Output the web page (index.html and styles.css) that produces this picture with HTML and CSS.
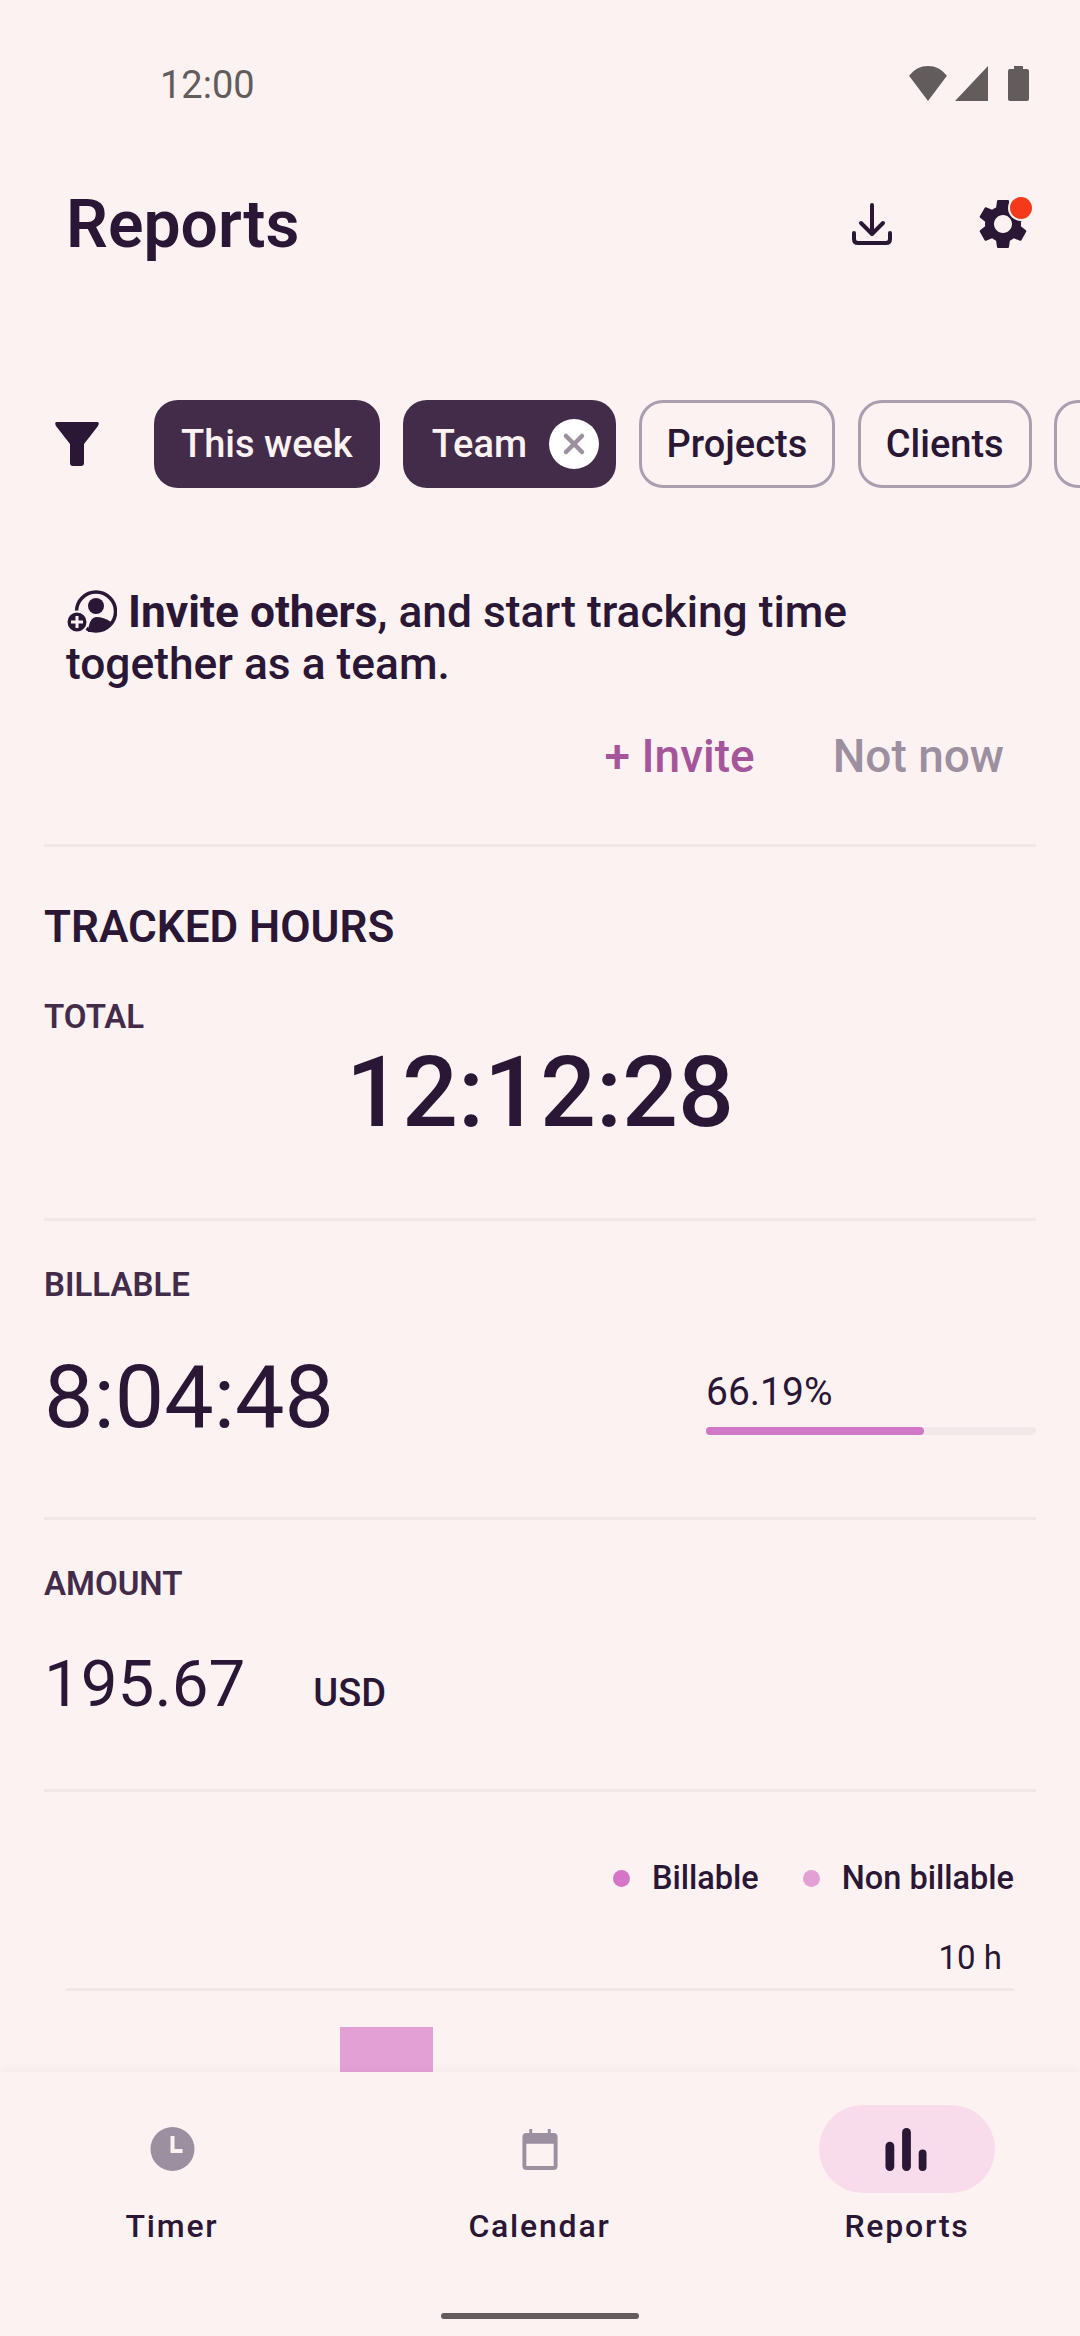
FILE: index.html
```html
<!DOCTYPE html>
<html lang="en">
<head>
    <meta charset="UTF-8">
    <meta name="viewport" content="width=device-width, initial-scale=1.0">
    <title>Reports</title>
    <link rel="stylesheet" href="styles.css">
</head>
<body>
    <div class="page">
        <div class="status-bar">
            <span class="status-time">12:00</span>
            <div class="status-icons">
                <svg class="wifi-icon" viewBox="0 0 40 36"><path d="M20 36 L0.5 10 Q8 0 20 0 Q32 0 39.5 10 Z"/></svg>
                <svg class="signal-icon" viewBox="0 0 33 35"><path d="M33 0 V35 H0 Z"/></svg>
                <svg class="battery-icon" viewBox="0 0 21 35"><path d="M6 0 H15 V3 H19 Q21 3 21 5 V33 Q21 35 19 35 H2 Q0 35 0 33 V5 Q0 3 2 3 H6 Z"/></svg>
            </div>
        </div>

        <div class="page-header">
            <h1>Reports</h1>
            <svg class="download-icon" viewBox="0 0 40 42"><path d="M20 2 V30 M9 20 L20 31 L31 20 M2 30 V36 Q2 40 6 40 H34 Q38 40 38 36 V30"/></svg>
            <div class="settings">
                <svg class="gear-icon" viewBox="0 0 24 24"><path d="M19.14 12.94c.04-.3.06-.61.06-.94 0-.32-.02-.64-.07-.94l2.03-1.58c.18-.14.23-.41.12-.61l-1.92-3.32c-.12-.22-.37-.29-.59-.22l-2.39.96c-.5-.38-1.03-.7-1.62-.94l-.36-2.54c-.04-.24-.24-.41-.48-.41h-3.84c-.24 0-.43.17-.47.41l-.36 2.54c-.59.24-1.13.57-1.62.94l-2.39-.96c-.22-.08-.47 0-.59.22L2.74 8.87c-.12.21-.08.47.12.61l2.03 1.58c-.05.3-.09.63-.09.94s.02.64.07.94l-2.03 1.58c-.18.14-.23.41-.12.61l1.92 3.32c.12.22.37.29.59.22l2.39-.96c.5.38 1.03.7 1.62.94l.36 2.54c.05.24.24.41.48.41h3.84c.24 0 .44-.17.47-.41l.36-2.54c.59-.24 1.13-.56 1.62-.94l2.39.96c.22.08.47 0 .59-.22l1.92-3.32c.12-.22.07-.47-.12-.61l-2.01-1.58zM12 15.6c-1.98 0-3.6-1.62-3.6-3.6s1.62-3.6 3.6-3.6 3.6 1.62 3.6 3.6-1.62 3.6-3.6 3.6z"/></svg>
                <span class="settings-badge"></span>
            </div>
        </div>

        <div class="filter-row">
            <svg class="filter-icon" viewBox="0 0 44 44"><path d="M2 0 H42 Q45 0 43 4 L29 22 V41 Q29 44 26 44 H18 Q15 44 15 41 V22 L1 4 Q-1 0 2 0 Z"/></svg>
            <div class="chip chip-active">This week</div>
            <div class="chip chip-active chip-team">
                Team
                <svg class="chip-close" viewBox="0 0 50 50"><circle cx="25" cy="25" r="25"/><path d="M17 17 L33 33 M33 17 L17 33"/></svg>
            </div>
            <div class="chip">Projects</div>
            <div class="chip">Clients</div>
            <div class="chip chip-stub"></div>
        </div>

        <div class="invite">
            <p class="invite-text">
                <svg class="invite-icon" viewBox="0 0 51 43">
                    <circle class="invite-ring" cx="30" cy="21.5" r="19.5"/>
                    <circle class="invite-fill" cx="30" cy="16" r="8"/>
                    <path class="invite-fill" d="M22 42 Q23 28 30 27 Q38 27 45 32 Q38 42 26 42 Z"/>
                    <circle class="invite-badge" cx="11" cy="32" r="10.5"/>
                    <path class="invite-plus" d="M11 26 V38 M5 32 H17"/>
                </svg>
                <b>Invite others</b>, and start tracking time<br>together as a team.
            </p>
            <div class="invite-actions">
                <span class="invite-yes">+ Invite</span>
                <span class="invite-no">Not now</span>
            </div>
        </div>

        <div class="section section-total">
            <h2>TRACKED HOURS</h2>
            <div class="label">TOTAL</div>
            <div class="total-value">12:12:28</div>
        </div>

        <div class="section section-billable">
            <div class="label">BILLABLE</div>
            <div class="billable-row">
                <div class="billable-value">8:04:48</div>
                <div class="billable-progress">
                    <div class="billable-percent">66.19%</div>
                    <div class="progress-track"><div class="progress-fill" style="width: 66.19%"></div></div>
                </div>
            </div>
        </div>

        <div class="section section-amount">
            <div class="label">AMOUNT</div>
            <div class="amount-row">
                <span class="amount-value">195.67</span>
                <span class="amount-currency">USD</span>
            </div>
        </div>

        <div class="chart">
            <div class="legend">
                <span class="legend-item"><i class="dot dot-billable"></i>Billable</span>
                <span class="legend-item"><i class="dot dot-non"></i>Non billable</span>
            </div>
            <div class="chart-axis">10 h</div>
            <div class="chart-plot"><div class="chart-bar"></div></div>
        </div>

        <nav class="bottom-nav">
            <div class="nav-item">
                <div class="nav-icon">
                    <svg class="clock-icon" viewBox="0 0 44 46"><path fill-rule="evenodd" d="M22 1 A22 22 0 1 1 22 45 A22 22 0 1 1 22 1 Z M20 10 V27 H32 V23 H24 V10 Z"/></svg>
                </div>
                <span>Timer</span>
            </div>
            <div class="nav-item">
                <div class="nav-icon">
                    <svg class="calendar-icon" viewBox="0 0 36 42"><path fill-rule="evenodd" d="M7 0 H10 V4 H26 V0 H29 V4 H32 Q36 4 36 8 V38 Q36 42 32 42 H4 Q0 42 0 38 V8 Q0 4 4 4 H7 Z M4 15 V38 H32 V15 Z"/></svg>
                </div>
                <span>Calendar</span>
            </div>
            <div class="nav-item nav-item-active">
                <div class="nav-icon">
                    <svg class="bars-icon" viewBox="0 0 42 44"><rect x="0" y="14" width="9" height="30" rx="4.5"/><rect x="17" y="0" width="9" height="44" rx="4.5"/><rect x="34" y="22" width="8" height="22" rx="4"/></svg>
                </div>
                <span>Reports</span>
            </div>
        </nav>
        <div class="home-bar"></div>
    </div>
</body>
</html>
```

FILE: styles.css
```css
* {
    box-sizing: border-box;
}

body {
    margin: 0;
    background: #fdf2f2;
    color: #2a1735;
    font-family: 'Roboto', sans-serif;
}

.page {
    position: relative;
    display: flex;
    flex-direction: column;
    width: 1080px;
    height: 2336px;
    overflow: hidden;
}

/* status bar */
.status-bar {
    display: flex;
    justify-content: space-between;
    align-items: center;
    height: 36px;
    margin-top: 65px;
    padding: 0 51px 0 160px;
    color: #635c5c;
}

.status-time {
    padding-top: 3px;
    font-size: 38px;
}

.status-icons {
    display: flex;
    align-items: center;
    gap: 7px;
}

.status-icons svg {
    display: block;
    height: 35px;
    fill: #635c5c;
}

.wifi-icon {
    width: 40px;
}

.signal-icon {
    width: 33px;
}

.battery-icon {
    width: 21px;
    margin-left: 13px;
}

/* header */
.page-header {
    display: flex;
    align-items: center;
    height: 60px;
    margin-top: 93px;
    padding-left: 66px;
}

h1 {
    margin: 0;
    flex: 1;
    font-size: 66px;
    font-weight: 600;
}

.download-icon {
    width: 40px;
    height: 42px;
    margin-right: 81px;
    fill: none;
    stroke: #2a1735;
    stroke-width: 4;
    stroke-linecap: round;
    stroke-linejoin: round;
}

.settings {
    position: relative;
    width: 60px;
    height: 60px;
    margin-right: 47px;
}

.gear-icon {
    display: block;
    width: 60px;
    height: 60px;
    fill: #2a1735;
}

.settings-badge {
    position: absolute;
    top: 1px;
    right: -1px;
    width: 26px;
    height: 26px;
    border: 2px solid #fdf2f2;
    border-radius: 50%;
    background: #f53a1c;
}

/* filter chips */
.filter-row {
    display: flex;
    align-items: center;
    gap: 22.5px;
    height: 88px;
    margin-top: 146px;
    padding-left: 55px;
    white-space: nowrap;
}

.filter-icon {
    flex: none;
    width: 44px;
    height: 44px;
    margin-right: 32px;
    fill: #2a1735;
}

.chip {
    display: flex;
    flex: none;
    align-items: center;
    height: 88px;
    padding: 0 25px;
    border: 3px solid #ab9eb0;
    border-radius: 24px;
    font-size: 38px;
    font-weight: 500;
}

.chip-active {
    padding: 0 27.5px;
    border: 0;
    background: #422c4a;
    color: #fdf2f2;
}

.chip-team {
    gap: 22px;
    padding-left: 29px;
    padding-right: 17px;
}

.chip-stub {
    width: 60px;
}

.chip-close {
    width: 50px;
    height: 50px;
}

.chip-close circle {
    fill: #fff;
}

.chip-close path {
    fill: none;
    stroke: #9c8fa0;
    stroke-width: 4.5;
    stroke-linecap: round;
}

/* invite banner */
.invite {
    padding: 0 66px;
    margin-top: 98px;
}

.invite-text {
    margin: 0;
    font-size: 44.3px;
    line-height: 52px;
    font-weight: 500;
}

.invite-text b {
    font-weight: 700;
}

.invite-icon {
    width: 51px;
    height: 43px;
    vertical-align: -6px;
}

.invite-ring {
    fill: none;
    stroke: #2a1735;
    stroke-width: 3.5;
}

.invite-fill {
    fill: #2a1735;
}

.invite-badge {
    fill: #2a1735;
    stroke: #fdf2f2;
    stroke-width: 2;
}

.invite-plus {
    stroke: #fdf2f2;
    stroke-width: 3;
}

.invite-actions {
    display: flex;
    justify-content: flex-end;
    gap: 78px;
    margin-top: 38px;
    padding-right: 10px;
    font-size: 46px;
    font-weight: 500;
    line-height: 56px;
}

.invite-yes {
    color: #a5569a;
}

.invite-no {
    color: #9c8fa0;
}

/* stats */
.section {
    margin: 0 44px;
    border-top: 3px solid #f2e8ea;
}

.section-total {
    margin-top: 60px;
    height: 374px;
    padding-top: 56px;
}

h2 {
    margin: 0;
    font-size: 44px;
    line-height: 48px;
    font-weight: 600;
}

.label {
    font-size: 33px;
    line-height: 36px;
    font-weight: 600;
    color: #422c4a;
}

.section-total .label {
    margin-top: 48px;
}

.total-value {
    margin-top: 8px;
    text-align: center;
    font-size: 98.5px;
    line-height: 100px;
    font-weight: 500;
}

.section-billable {
    height: 299px;
    padding-top: 46px;
}

.billable-row {
    display: flex;
    justify-content: space-between;
    margin-top: 44px;
}

.billable-value {
    font-size: 88px;
    line-height: 100px;
}

.billable-progress {
    width: 330px;
    padding-top: 23px;
}

.billable-percent {
    font-size: 39px;
    line-height: 44px;
}

.progress-track {
    height: 8px;
    margin-top: 13px;
    border-radius: 4px;
    background: #f2e8ea;
}

.progress-fill {
    height: 8px;
    border-radius: 4px;
    background: #d077c7;
}

.section-amount {
    height: 272px;
    padding-top: 46px;
}

.amount-row {
    display: flex;
    align-items: baseline;
    gap: 68px;
    margin-top: 42px;
}

.amount-value {
    font-size: 65.5px;
    line-height: 80px;
}

.amount-currency {
    font-size: 38px;
    font-weight: 500;
}

/* chart */
.chart {
    flex: 1;
    min-height: 0;
    margin: 0 44px;
    border-top: 3px solid #f2e8ea;
    overflow: hidden;
}

.legend {
    display: flex;
    justify-content: flex-end;
    gap: 44px;
    margin-top: 66px;
    padding-right: 22px;
    font-size: 32.5px;
    line-height: 40px;
    font-weight: 500;
}

.legend-item {
    display: flex;
    align-items: center;
}

.dot {
    width: 17px;
    height: 17px;
    margin-right: 22px;
    border-radius: 50%;
}

.dot-billable {
    background: #d575c8;
}

.dot-non {
    background: #e3a0d4;
}

.chart-axis {
    margin-top: 40px;
    padding-right: 34px;
    text-align: right;
    font-size: 33px;
    line-height: 40px;
}

.chart-plot {
    margin: 10px 22px 0;
    padding: 36px 0 0 274px;
    border-top: 3px solid #f2e8ea;
}

.chart-bar {
    width: 93px;
    height: 60px;
    background: #e3a0d4;
}

/* bottom nav */
.bottom-nav {
    display: flex;
    flex: none;
    justify-content: space-between;
    height: 264px;
    padding: 33px 85px 0 84px;
    background: #fdf2f2;
    box-shadow: 0 -3px 6px rgba(66, 44, 74, 0.04);
}

.nav-item {
    display: flex;
    flex-direction: column;
    align-items: center;
    width: 176px;
    font-size: 32px;
    font-weight: 500;
    letter-spacing: 1.8px;
}

.nav-icon {
    display: flex;
    flex: none;
    align-items: center;
    justify-content: center;
    width: 176px;
    height: 88px;
    margin-bottom: 14px;
    border-radius: 44px;
}

.nav-item-active .nav-icon {
    background: #f8dcec;
}

.clock-icon {
    width: 45px;
    height: 46px;
    fill: #9c8fa0;
}

.calendar-icon {
    width: 36px;
    height: 41px;
    fill: #9c8fa0;
}

.bars-icon {
    width: 42px;
    height: 43px;
    margin-left: -2px;
    fill: #2a1735;
}

.home-bar {
    position: absolute;
    left: 441px;
    bottom: 17px;
    width: 198px;
    height: 6px;
    border-radius: 3px;
    background: #635c5c;
}
```
